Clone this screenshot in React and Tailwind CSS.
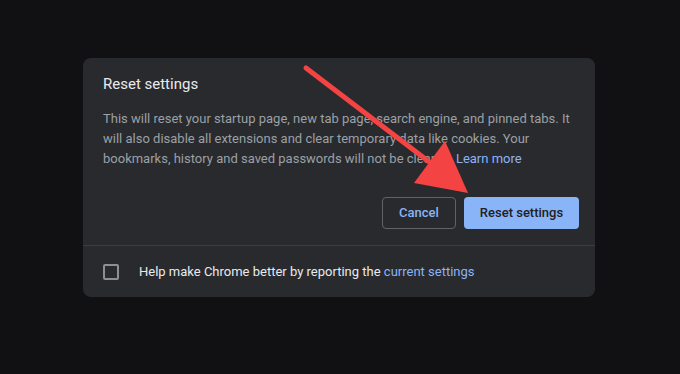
export default function App() {
  return (
    <div
      className="relative w-[680px] h-[374px] bg-[#111113] overflow-hidden"
      style={{ fontFamily: 'Roboto, "Liberation Sans", sans-serif' }}
    >
      <div className="absolute left-[83px] top-[58px] w-[512px] h-[239px] rounded-lg bg-[#292a2d] flex flex-col">
        <div className="pl-5 pr-5 pt-[14px]">
          <h2 className="text-[15px] leading-6 text-[#e8eaed]">Reset settings</h2>
          <p className="mt-[13px] text-[13px] leading-5 text-[#9aa0a6]">
            This will reset your startup page, new tab page, search engine, and pinned tabs. It
            will also disable all extensions and clear temporary data like cookies. Your
            bookmarks, history and saved passwords will not be cleared.{' '}
            <span className="text-[#8ab4f8]">Learn more</span>
          </p>
        </div>
        <div className="flex justify-end gap-2 pr-4 mt-[28px]">
          <button className="h-8 w-[74px] rounded border border-[#5f6368] text-[13px] font-medium text-[#8ab4f8]">
            Cancel
          </button>
          <button className="h-8 w-[115px] rounded bg-[#8ab4f8] text-[13px] font-medium text-[#202124]">
            Reset settings
          </button>
        </div>
        <div className="mt-4 border-t border-[#3c3d40] flex-1 flex items-center pl-5">
          <div className="w-4 h-4 rounded-[2px] border-2 border-[#8c9095]"></div>
          <span className="ml-5 text-[13px] text-[#e8eaed]">
            Help make Chrome better by reporting the{' '}
            <span className="text-[#8ab4f8]">current settings</span>
          </span>
        </div>
      </div>
      <svg className="absolute inset-0" width="680" height="374" viewBox="0 0 680 374">
        <line x1="306" y1="68" x2="432" y2="164" stroke="#f44343" strokeWidth="5" strokeLinecap="round" />
        <polygon points="445,141 414,183 468,193" fill="#f44343" />
      </svg>
    </div>
  );
}
